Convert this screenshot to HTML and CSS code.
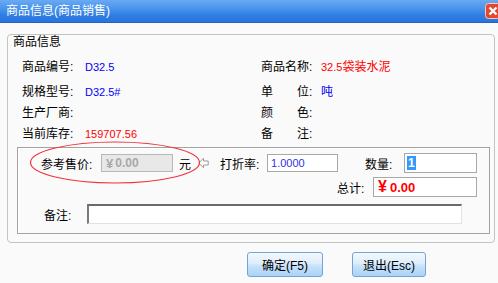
FILE: index.html
```html
<!DOCTYPE html>
<html lang="zh-CN">
<head>
    <meta charset="UTF-8">
    <title>商品信息(商品销售)</title>
    <link rel="stylesheet" href="styles.css">
</head>
<body>
<div class="window">
    <div class="titlebar">
        <span class="title-text">商品信息(商品销售)</span>
        <span class="close-btn">
            <svg width="16" height="16" viewBox="0 0 16 16">
                <rect x="0.5" y="0.5" width="15" height="15" rx="3" fill="#e4472f" stroke="#f6c7bd"/>
                <path d="M4.5 4.5 L11.5 11.5 M11.5 4.5 L4.5 11.5" stroke="#fff" stroke-width="2.4"/>
            </svg>
        </span>
    </div>

    <div class="group">
        <div class="group-title">商品信息</div>
        <div class="info">
            <div class="info-item"><span class="lbl">商品编号:</span><span class="blue num">D32.5</span></div>
            <div class="info-item"><span class="lbl lbl-r">商品名称:</span><span class="red"><span class="num">32.5</span>袋装水泥</span></div>
            <div class="info-item"><span class="lbl">规格型号:</span><span class="blue num">D32.5#</span></div>
            <div class="info-item"><span class="lbl lbl-r"><span class="spread"><span>单</span><span>位</span></span>:</span><span class="blue">吨</span></div>
            <div class="info-item"><span class="lbl">生产厂商:</span></div>
            <div class="info-item"><span class="lbl lbl-r"><span class="spread"><span>颜</span><span>色</span></span>:</span></div>
            <div class="info-item"><span class="lbl">当前库存:</span><span class="red num">159707.56</span></div>
            <div class="info-item"><span class="lbl lbl-r"><span class="spread"><span>备</span><span>注</span></span>:</span></div>
        </div>

        <div class="sale-box">
            <div class="sale-row">
                <span class="price-lbl">参考售价:</span>
                <div class="field field-price"><span class="yen">¥</span> 0.00</div>
                <span class="unit">元</span>
                <svg class="arrow" width="11" height="12" viewBox="0 0 11 12">
                    <path d="M0.8 6 L5.5 1.3 L5.5 4 L10.2 4 L10.2 8 L5.5 8 L5.5 10.7 Z" fill="#fff" stroke="#9a9a9a"/>
                </svg>
                <span class="rate-lbl">打折率:</span>
                <div class="field field-rate">1.0000</div>
                <span class="qty-lbl">数量:</span>
                <div class="field field-qty"><span class="selected">1</span></div>
            </div>
            <div class="sale-row total-row">
                <span class="total-lbl">总计:</span>
                <div class="field field-total"><span class="yen">¥</span> 0.00</div>
            </div>
            <div class="sale-row note-row">
                <span class="note-lbl">备注:</span>
                <div class="field field-note"></div>
            </div>
        </div>
    </div>

    <div class="buttons">
        <div class="btn btn-ok">确定(F5)</div>
        <div class="btn btn-exit">退出(Esc)</div>
    </div>

    <svg class="mark" width="172" height="45" viewBox="0 0 172 45">
        <ellipse cx="86" cy="22.5" rx="84.5" ry="20.5" fill="none" stroke="#f0343a" stroke-width="1.2"/>
    </svg>
</div>
</body>
</html>
```

FILE: styles.css
```css
* {
    box-sizing: border-box;
}

html,
body {
    margin: 0;
    padding: 0;
    overflow: hidden;
}

body {
    font-family: "Liberation Sans", "Noto Sans CJK SC", sans-serif;
    font-size: 12px;
    color: #000;
    background: #fafafa;
}

.window {
    position: relative;
    width: 498px;
    height: 283px;
    background: #fafafa;
}

/* title bar */
.titlebar {
    display: flex;
    align-items: center;
    height: 23px;
    padding-left: 6px;
    background: linear-gradient(to bottom, #6aaaf3 0%, #4793ec 40%, #2f7de3 70%, #2a74dc 100%);
    border-bottom: 1px solid #1d62cc;
    color: #fff;
}

.title-text {
    line-height: 14px;
}

.close-btn {
    display: flex;
    margin-left: auto;
    margin-right: -3px;
}

/* outer group */
.group {
    margin: 11px 3px 0 7px;
    border: 1px solid #c3c3c3;
    border-radius: 4px;
}

.group-title {
    display: inline-block;
    margin: -3px 0 0 4px;
    padding: 0 1px;
    line-height: 12px;
    font-size: 12px;
    background: #fafafa;
}

.info {
    display: grid;
    grid-template-columns: 239px 1fr;
    grid-template-rows: 25px 21px 21px 21px;
    align-items: start;
    margin-top: 8px;
    padding-left: 14px;
}

.info-item {
    display: flex;
    line-height: 21px;
    white-space: nowrap;
}

.lbl {
    display: flex;
    width: 63px;
}

.lbl-r {
    width: 60px;
}

.spread {
    display: flex;
    justify-content: space-between;
    width: 48px;
}

.num {
    font-size: 11px;
}

.blue {
    color: #0000ff;
}

.red {
    color: #ff0000;
}

/* sale box */
.sale-box {
    margin: 2px 4px 8px 9px;
    padding: 5px 0 9px 0;
    border: 1px solid #a2a2a2;
    box-shadow: inset 1px 1px 0 #fff;
}

.sale-row {
    display: flex;
    align-items: center;
    height: 20px;
    white-space: nowrap;
}

.sale-row:first-child {
    padding-left: 23px;
}

.field {
    display: flex;
    align-items: center;
    border: 1px solid #a8a8a8;
    background: #fff;
    padding-left: 3px;
}

.price-lbl {
    width: 60px;
}

.field-price {
    width: 72px;
    height: 18px;
    background: #e8e8e8;
    border-color: #b8b8b8;
    color: #a9a9a9;
    font-weight: bold;
    padding-left: 4px;
}

.yen {
    font-size: 13px;
    margin-right: 2px;
}

.unit {
    margin-left: 6px;
}

.arrow {
    margin-left: 7px;
}

.rate-lbl {
    width: 47px;
    margin-left: 11px;
}

.field-rate {
    width: 71px;
    height: 18px;
    font-size: 11px;
    color: #3030e8;
}

.qty-lbl {
    width: 39px;
    margin-left: 27px;
}

.field-qty {
    width: 73px;
    height: 20px;
    padding-left: 2px;
}

.selected {
    background: #3399ff;
    color: #fff;
    font-weight: bold;
    line-height: 14px;
    padding: 0 1px;
}

.total-row {
    justify-content: flex-end;
    padding-right: 12px;
    margin-top: 4px;
}

.total-lbl {
    width: 36px;
}

.field-total {
    width: 104px;
    height: 20px;
    color: #ff0000;
    font-weight: bold;
    font-size: 13px;
    padding-left: 4px;
}

.field-total .yen {
    font-size: 16px;
    margin-right: 3px;
}

.note-row {
    margin-top: 7px;
    padding-left: 26px;
}

.note-lbl {
    width: 43px;
}

.field-note {
    width: 375px;
    height: 20px;
    border-width: 2px 1px 1px 2px;
    border-style: solid;
    border-color: #6a6a6a #e2e2e2 #e2e2e2 #7a7a7a;
}

/* buttons */
.buttons {
    display: flex;
    gap: 29px;
    margin-top: 9px;
    padding-left: 247px;
}

.btn {
    display: flex;
    align-items: center;
    justify-content: center;
    height: 25px;
    border: 1px solid #74a4d6;
    border-radius: 3px;
    background: linear-gradient(to bottom, #f3f9fe 0%, #deedfb 45%, #c8e2fa 55%, #a9d3f6 100%);
}

.btn-ok {
    width: 76px;
}

.btn-exit {
    width: 74px;
}

/* red mark drawn over the price */
.mark {
    position: absolute;
    left: 29px;
    top: 140px;
}
```
